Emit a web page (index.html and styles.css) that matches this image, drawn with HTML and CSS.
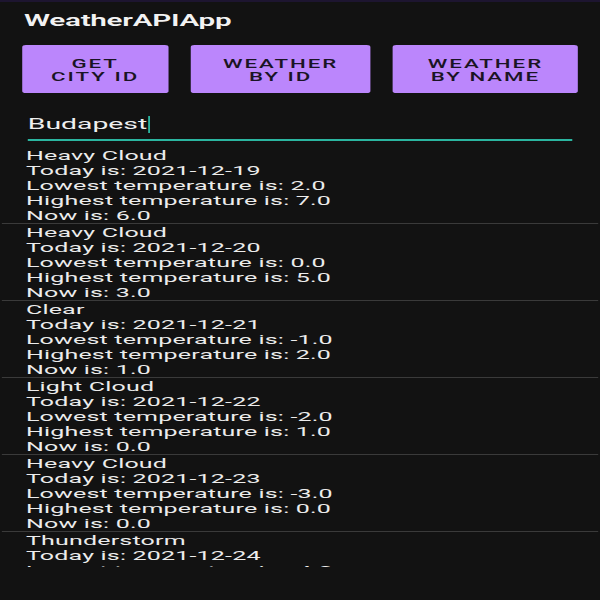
FILE: index.html
```html
<!DOCTYPE html>
<html>
<head>
<meta charset="utf-8">
<link rel="stylesheet" href="styles.css">
</head>
<body>
<div class="app">
  <div class="statusbar"></div>
  <header class="toolbar"><span class="title">WeatherAPIApp</span></header>
  <div class="buttons">
    <button class="btn b1">GET<br>CITY ID</button>
    <button class="btn b2">WEATHER<br>BY ID</button>
    <button class="btn b3">WEATHER<br>BY NAME</button>
  </div>
  <div class="field"><span class="value">Budapest</span><span class="cursor"></span></div>
  <div class="list">
    <div class="item"><div>Heavy Cloud</div><div>Today is: 2021-12-19</div><div>Lowest temperature is: 2.0</div><div>Highest temperature is: 7.0</div><div>Now is: 6.0</div></div>
    <div class="item"><div>Heavy Cloud</div><div>Today is: 2021-12-20</div><div>Lowest temperature is: 0.0</div><div>Highest temperature is: 5.0</div><div>Now is: 3.0</div></div>
    <div class="item"><div>Clear</div><div>Today is: 2021-12-21</div><div>Lowest temperature is: -1.0</div><div>Highest temperature is: 2.0</div><div>Now is: 1.0</div></div>
    <div class="item"><div>Light Cloud</div><div>Today is: 2021-12-22</div><div>Lowest temperature is: -2.0</div><div>Highest temperature is: 1.0</div><div>Now is: 0.0</div></div>
    <div class="item"><div>Heavy Cloud</div><div>Today is: 2021-12-23</div><div>Lowest temperature is: -3.0</div><div>Highest temperature is: 0.0</div><div>Now is: 0.0</div></div>
    <div class="item"><div>Thunderstorm</div><div>Today is: 2021-12-24</div><div>Lowest temperature is: -4.0</div></div>
  </div>
</div>
</body>
</html>
```
FILE: styles.css
```css
html, body {
  margin: 0;
  padding: 0;
  background: #121212;
  overflow: hidden;
}
.app {
  width: 324px;
  height: 600px;
  transform: scaleX(1.852);
  transform-origin: 0 0;
  font-family: Roboto, "Liberation Sans", sans-serif;
  color: #ececec;
  display: flex;
  flex-direction: column;
}
.statusbar {
  height: 2px;
  background: #1d1530;
}
.toolbar {
  height: 34px;
  box-sizing: border-box;
  padding: 4px 0 0 13px;
  display: flex;
  align-items: center;
}
.title {
  font-size: 16px;
  font-weight: 600;
  color: #f2f2f2;
  line-height: 20px;
  letter-spacing: -0.15px;
}
.buttons {
  margin-top: 9px;
  padding: 0 12px;
  display: flex;
  gap: 11.9px;
  height: 48px;
}
.btn {
  border: none;
  margin: 0;
  padding: 3px 0 0 0;
  border-radius: 2px;
  background: #bb86fc;
  color: #1a1424;
  font-family: Roboto, "Liberation Sans", sans-serif;
  font-weight: 500;
  font-size: 12px;
  line-height: 13px;
  letter-spacing: 0.09em;
  text-align: center;
}
.b1 { width: 79px; }
.b2 { width: 98px; }
.b3 { width: 100px; }
.field {
  margin: 22px 0 0 15px;
  width: 294px;
  height: 24px;
  border-bottom: 2px solid #2bb5a0;
  display: flex;
  align-items: flex-start;
}
.value {
  font-size: 15.3px;
  line-height: 18px;
  color: #efefef;
}
.cursor {
  width: 1.3px;
  height: 17px;
  background: #2bb5a0;
  margin-left: 0.6px;
  margin-top: 1px;
}
.list {
  margin-top: 6px;
  height: 420px;
  overflow: hidden;
}
.item {
  margin: 0 1px;
  padding: 1px 0 0 13px;
  border-bottom: 1px solid #3a3a3a;
  font-size: 13.5px;
  line-height: 15px;
  letter-spacing: 0.1px;
  color: #ececec;
}
```
